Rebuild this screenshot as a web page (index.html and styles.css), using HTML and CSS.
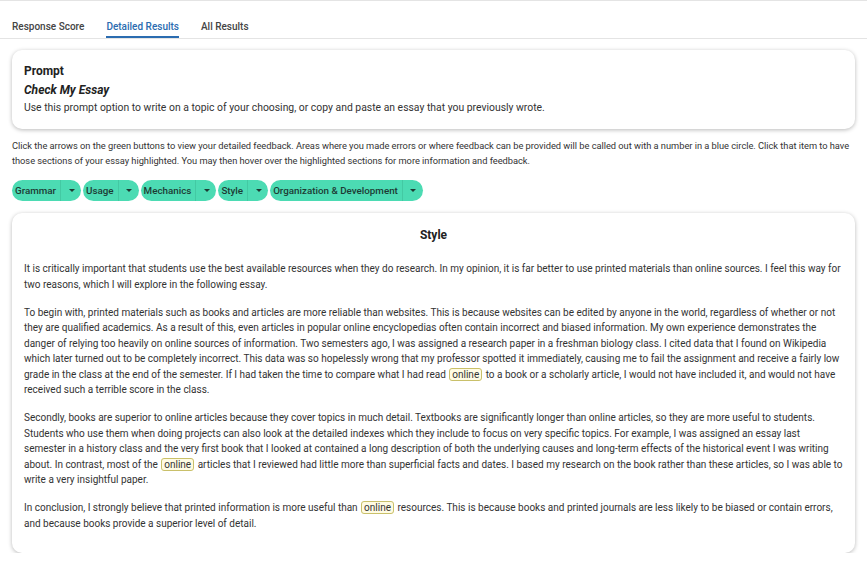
FILE: index.html
```html
<!DOCTYPE html>
<html>
<head>
<meta charset="utf-8">
<link rel="stylesheet" href="styles.css">
</head>
<body>
<nav class="tabs">
  <a class="tab">Response Score</a>
  <a class="tab active">Detailed Results</a>
  <a class="tab">All Results</a>
</nav>
<main class="content">
  <section class="card prompt">
    <h2 class="prompt-title">Prompt</h2>
    <h3 class="prompt-name">Check My Essay</h3>
    <p class="prompt-desc">Use this prompt option to write on a topic of your choosing, or copy and paste an essay that you previously wrote.</p>
  </section>
  <p class="instructions">Click the arrows on the green buttons to view your detailed feedback. Areas where you made errors or where feedback can be provided will be called out with a number in a blue circle. Click that item to have those sections of your essay highlighted. You may then hover over the highlighted sections for more information and feedback.</p>
  <div class="chips">
    <div class="chip"><span class="chip-label">Grammar</span><span class="chip-caret"></span></div>
    <div class="chip"><span class="chip-label">Usage</span><span class="chip-caret"></span></div>
    <div class="chip"><span class="chip-label">Mechanics</span><span class="chip-caret"></span></div>
    <div class="chip"><span class="chip-label">Style</span><span class="chip-caret"></span></div>
    <div class="chip"><span class="chip-label">Organization &amp; Development</span><span class="chip-caret"></span></div>
  </div>
  <section class="card essay">
    <h2 class="essay-title">Style</h2>
    <p>It is critically important that students use the best available resources when they do research. In my opinion, it is far better to use printed materials than online sources. I feel this way for two reasons, which I will explore in the following essay.</p>
    <p>To begin with, printed materials such as books and articles are more reliable than websites. This is because websites can be edited by anyone in the world, regardless of whether or not they are qualified academics. As a result of this, even articles in popular online encyclopedias often contain incorrect and biased information. My own experience demonstrates the danger of relying too heavily on online sources of information. Two semesters ago, I was assigned a research paper in a freshman biology class. I cited data that I found on Wikipedia which later turned out to be completely incorrect. This data was so hopelessly wrong that my professor spotted it immediately, causing me to fail the assignment and receive a fairly low grade in the class at the end of the semester. If I had taken the time to compare what I had read <span class="mark">online</span> to a book or a scholarly article, I would not have included it, and would not have received such a terrible score in the class.</p>
    <p>Secondly, books are superior to online articles because they cover topics in much detail. Textbooks are significantly longer than online articles, so they are more useful to students. Students who use them when doing projects can also look at the detailed indexes which they include to focus on very specific topics. For example, I was assigned an essay last semester in a history class and the very first book that I looked at contained a long description of both the underlying causes and long-term effects of the historical event I was writing about. In contrast, most of the <span class="mark">online</span> articles that I reviewed had little more than superficial facts and dates. I based my research on the book rather than these articles, so I was able to write a very insightful paper.</p>
    <p>In conclusion, I strongly believe that printed information is more useful than <span class="mark">online</span> resources. This is because books and printed journals are less likely to be biased or contain errors, and because books provide a superior level of detail.</p>
  </section>
</main>
</body>
</html>
```
FILE: styles.css
```css
* { box-sizing: border-box; }
body {
  margin: 0;
  font-family: Roboto, "Noto Sans", sans-serif;
  color: #333;
  background: #fff;
}
.tabs {
  display: flex;
  align-items: stretch;
  gap: 22px;
  height: 39px;
  padding: 0 12px;
  border-top: 1px solid #e4e4e4;
  border-bottom: 1px solid #e4e4e4;
}
.tab {
  display: flex;
  align-items: flex-end;
  padding-bottom: 4px;
  font-size: 10px;
  font-weight: 500;
  color: #444;
  border-bottom: 2px solid transparent;
  margin-bottom: 0;
}
.tab.active {
  color: #2b6cb0;
  border-bottom-color: #2b6cb0;
}
.content {
  padding: 11px 12px 0;
}
.card {
  background: #fff;
  border-radius: 10px;
  box-shadow: 0 1px 4px rgba(0,0,0,0.28);
}
.prompt {
  padding: 12px 12px 13px;
}
.prompt-title {
  margin: 0;
  font-size: 12px;
  font-weight: 700;
  color: #222;
  line-height: 18px;
}
.prompt-name {
  margin: 1px 0 0;
  font-size: 12px;
  font-weight: 700;
  font-style: italic;
  color: #222;
  line-height: 18px;
}
.prompt-desc {
  margin: 0;
  font-size: 10.4px;
  line-height: 17px;
  color: #333;
}
.instructions {
  margin: 9px 0 0;
  font-size: 9.3px;
  line-height: 15px;
  color: #333;
  letter-spacing: -0.03px;
}
.chips {
  display: flex;
  gap: 2px;
  margin-top: 12px;
}
.chip {
  display: flex;
  align-items: center;
  height: 21px;
  background: #4cdbb3;
  border-radius: 11px;
  color: #1d3a33;
  font-size: 9.8px;
  font-weight: 500;
}
.chip-label {
  padding: 0 4px 0 3px;
  height: 100%;
  display: flex;
  align-items: center;
  border-right: 1px solid #43c9a3;
}
.chip-caret {
  width: 20px;
  height: 100%;
  display: flex;
  align-items: center;
  justify-content: center;
}
.chip-caret::after {
  content: "";
  border-left: 3.5px solid transparent;
  border-right: 3.5px solid transparent;
  border-top: 3.5px solid #1d3a33;
  margin-left: 1px;
}
.essay {
  margin-top: 12px;
  padding: 14px 12px 22px;
}
.essay-title {
  margin: 0 0 18px;
  text-align: center;
  font-size: 12px;
  font-weight: 700;
  color: #222;
  line-height: 16px;
}
.essay p {
  margin: 0 0 12.5px;
  font-size: 10px;
  line-height: 15.5px;
  color: #333;
}
.essay p:last-child { margin-bottom: 0; }
.mark {
  background: #fffbe3;
  border: 1px solid #c9c06a;
  border-radius: 3px;
  padding: 0 2px;
  margin: 0 1px;
}
```
